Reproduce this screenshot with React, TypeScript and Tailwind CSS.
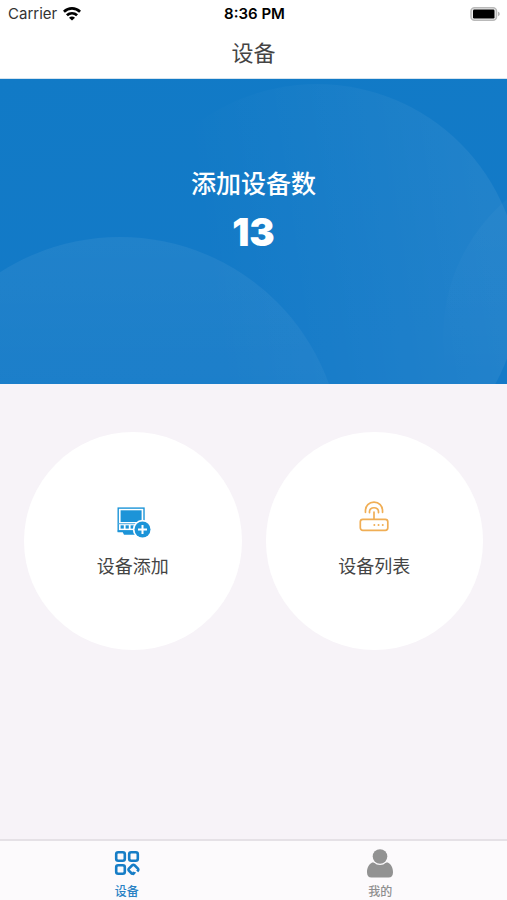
import React from "react";

function WifiIcon() {
  return (
    <svg width="18" height="14" viewBox="0 0 18 14" fill="none" stroke="#000" strokeWidth="2.8" aria-hidden="true">
      <path d="M.9 4.700C5.600 .3 12.400 .3 17.100 4.700" />
      <path d="M3.900 8.300c3-2.700 7.200-2.700 10.200 0" />
      <path d="M9 13.600 6 10.700c1.600-1.500 4.400-1.500 6 0z" fill="#000" stroke="none" />
    </svg>
  );
}

function BatteryIcon() {
  return (
    <svg width="31" height="14" viewBox="0 0 31 14" aria-hidden="true">
      <rect x="1" y="0.800" width="25.500" height="12.400" rx="3.500" fill="#eee" stroke="#b9b9b9" strokeWidth="1.500" />
      <rect x="3" y="2.600" width="21.500" height="8.800" rx="1.200" fill="#000" />
      <path d="M28 4.800c2.300.6 2.300 3.800 0 4.400z" fill="#b4b4b4" />
    </svg>
  );
}

function AddDeviceIcon() {
  return (
    <svg width="36" height="40" viewBox="0 0 36 40" aria-hidden="true">
      <rect x="3.200" y="7.100" width="25.800" height="22.800" fill="#fff" stroke="#1c94d8" strokeWidth="1.400" />
      <rect x="5.600" y="9.300" width="21" height="11.700" fill="#1c94d8" />
      <path d="M3.600 22h25v1.300h-25z" fill="#6bb9e6" />
      <rect x="5.600" y="24.300" width="3.200" height="3.300" fill="#1c94d8" />
      <rect x="10.600" y="24.300" width="3.200" height="3.300" fill="#1c94d8" />
      <rect x="15.600" y="24.300" width="3.200" height="3.300" fill="#1c94d8" />
      <path d="M2.600 29.500h19v1.800h-19zM7.600 31h15v2.800H9z" fill="#1c94d8" />
      <circle cx="27.500" cy="28.500" r="9.700" fill="#fff" />
      <circle cx="27.500" cy="28.500" r="8" fill="#1c94d8" />
      <path d="M27.500 24v9M23 28.500h9" stroke="#fff" strokeWidth="2" />
    </svg>
  );
}

function RouterIcon() {
  return (
    <svg width="36" height="40" viewBox="0 0 36 40" fill="none" stroke="#f0ae55" strokeWidth="1.700" strokeLinecap="round" aria-hidden="true">
      <rect x="4.300" y="18.300" width="27.500" height="11" rx="2.500" />
      <path d="M18 18V11" />
      <path d="M13.500 11.700c-.9-6.600 9.900-6.600 9 0" />
      <path d="M9.500 11.300C8.300-2.200 27.700-2.200 26.500 11.300" />
      <path d="M18.300 24h.1M22.500 24h.1M26.700 24h.1" strokeWidth="1.900" />
    </svg>
  );
}

function GridIcon() {
  return (
    <svg width="26" height="30" viewBox="0 0 26 30" fill="none" stroke="#167dc6" strokeWidth="2.600" aria-hidden="true">
      <rect x="2.200" y="3.200" width="8.600" height="8.600" rx="2" />
      <rect x="15.200" y="3.200" width="8.600" height="8.600" rx="2" />
      <rect x="2.200" y="16.200" width="8.600" height="8.600" rx="2" />
      <path d="M18.200 25l-3.300-3.400q-.8-1 0-2l3.300-3.300q1.200-.9 2.400 0l3.300 3.300q.8 1 0 2l-.7.800" />
      <path d="M18.900 22.600l3.300 1-2.400 2.600-2.600-.5z" fill="#167dc6" stroke="none" />
    </svg>
  );
}

function PersonIcon() {
  return (
    <svg width="26" height="30" viewBox="0 0 26 30" aria-hidden="true">
      <path d="M5.200 13.500h15.600c3.200 1.600 5.200 5.300 5.200 9.700 0 3.300-1.500 5.300-4.500 5.300h-17C1.500 28.500 0 26.500 0 23.200c0-4.400 2-8.100 5.200-9.700z" fill="#929292" />
      <circle cx="13" cy="7.500" r="8.600" fill="#fcfafc" />
      <circle cx="13" cy="7.500" r="7.300" fill="#929292" />
    </svg>
  );
}

function HeroBackdrop() {
  return (
    <svg className="absolute inset-0 h-full w-full" viewBox="0 0 507 305" preserveAspectRatio="xMidYMid slice" aria-hidden="true">
      <defs>
        <linearGradient id="base" x1="0" y1="0" x2="0.300" y2="1">
          <stop offset="0" stopColor="#117ac6" />
          <stop offset="1" stopColor="#147ac8" />
        </linearGradient>
        <linearGradient id="large" x1="0.200" y1="0.300" x2="0.900" y2="0.200">
          <stop offset="0" stopColor="#fff" stopOpacity="0" />
          <stop offset="0.350" stopColor="#fff" stopOpacity="0.020" />
          <stop offset="1" stopColor="#fff" stopOpacity="0.060" />
        </linearGradient>
        <linearGradient id="low" x1="0" y1="0" x2="0" y2="0.400">
          <stop offset="0" stopColor="#fff" stopOpacity="0.060" />
          <stop offset="1" stopColor="#fff" stopOpacity="0.030" />
        </linearGradient>
        <linearGradient id="side" x1="0" y1="0" x2="0" y2="1">
          <stop offset="0.080" stopColor="#fff" stopOpacity="0.030" />
          <stop offset="0.620" stopColor="#fff" stopOpacity="0" />
        </linearGradient>
      </defs>
      <rect width="507" height="305" fill="url(#base)" />
      <circle cx="317" cy="208" r="203" fill="url(#large)" />
      <circle cx="120" cy="380" r="222" fill="url(#low)" />
      <circle cx="623" cy="258" r="180" fill="url(#side)" />
    </svg>
  );
}

function RoundAction({ icon, label }: { icon: React.ReactNode; label: string }) {
  return (
    <button type="button" className="flex aspect-square flex-1 flex-col items-center justify-center gap-3 rounded-full bg-white">
      {icon}
      <span className="text-lg leading-7 text-[#444]">{label}</span>
    </button>
  );
}

export default function App() {
  return (
    <div className="flex min-h-screen flex-col bg-[#f7f3f8] font-[Inter,'Noto_Sans_CJK_SC',sans-serif]">
      <header className="border-b border-[#d5e3ee] bg-white">
        <div className="grid h-7 grid-cols-3 items-center pr-1.5 pl-2">
          <div className="flex items-center gap-1.5 text-[15px] leading-5 text-[#333]">
            Carrier
            <WifiIcon />
          </div>
          <div className="text-center text-[15px] leading-5 font-semibold text-black">8:36 PM</div>
          <div className="flex justify-end">
            <BatteryIcon />
          </div>
        </div>
        <h1 className="flex h-[50px] items-center justify-center text-[22px] leading-8 text-[#444]">设备</h1>
      </header>

      <section className="relative flex h-[305px] flex-col items-center pt-[87px] text-white">
        <HeroBackdrop />
        <h2 className="relative text-[25px] leading-9 font-medium">添加设备数</h2>
        <p className="relative mt-1.5 text-[38px] leading-12 font-black">13</p>
      </section>

      <main className="flex flex-1 items-start gap-6 px-6 pt-12">
        <RoundAction icon={<AddDeviceIcon />} label="设备添加" />
        <RoundAction icon={<RouterIcon />} label="设备列表" />
      </main>

      <nav className="flex h-[61px] border-t-2 border-[#e5e1e6] bg-[#fcfafc] text-xs leading-4 font-medium">
        <a href="#devices" aria-current="page" className="flex flex-1 flex-col items-center gap-[5px] pt-2 text-[#2a82c4]">
          <GridIcon />
          设备
        </a>
        <a href="#mine" className="flex flex-1 flex-col items-center gap-[5px] pt-2 text-[#8f8f8f]">
          <PersonIcon />
          我的
        </a>
      </nav>
    </div>
  );
}
